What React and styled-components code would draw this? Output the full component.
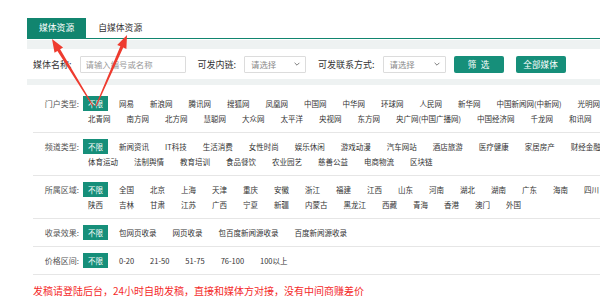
import React from 'react'
import styled, { createGlobalStyle } from 'styled-components'

const TEAL = '#168f7a'
const TEAL_DARK = '#11856f'

const GlobalStyle = createGlobalStyle`
    html, body {
        margin: 0;
        padding: 0;
        background: #fff;
        overflow: hidden;
        font-family: "Noto Sans CJK SC", "Noto Sans", sans-serif;
    }
`

const filters = [
    {
        label: '门户类型:',
        options: ['不限', '网易', '新浪网', '腾讯网', '搜狐网', '凤凰网', '中国网', '中华网', '环球网', '人民网', '新华网', '中国新闻网(中新网)', '光明网',
            '北青网', '南方网', '北方网', '慧聪网', '大众网', '太平洋', '央视网', '东方网', '央广网(中国广播网)', '中国经济网', '千龙网', '和讯网'],
    },
    {
        label: '频道类型:',
        options: ['不限', '新闻资讯', 'IT科技', '生活消费', '女性时尚', '娱乐休闲', '游戏动漫', '汽车网站', '酒店旅游', '医疗健康', '家居房产', '财经金融',
            '体育运动', '法制舆情', '教育培训', '食品餐饮', '农业园艺', '慈善公益', '电商物流', '区块链'],
    },
    {
        label: '所属区域:',
        options: ['不限', '全国', '北京', '上海', '天津', '重庆', '安徽', '浙江', '福建', '江西', '山东', '河南', '湖北', '湖南', '广东', '海南', '四川',
            '陕西', '吉林', '甘肃', '江苏', '广西', '宁夏', '新疆', '内蒙古', '黑龙江', '西藏', '青海', '香港', '澳门', '外国'],
    },
    {
        label: '收录效果:',
        options: ['不限', '包网页收录', '网页收录', '包百度新闻源收录', '百度新闻源收录'],
    },
    {
        label: '价格区间:',
        options: ['不限', '0-20', '21-50', '51-75', '76-100', '100以上'],
    },
]

// annotation arrows drawn over the screenshot
const arrows = [
    { tail: [93, 106], tip: [52, 39] },
    { tail: [96, 106], tip: [127, 35] },
]

function arrowPoints({ tail, tip }) {
    const dx = tip[0] - tail[0]
    const dy = tip[1] - tail[1]
    const len = Math.hypot(dx, dy)
    const ux = dx / len
    const uy = dy / len
    const nx = -uy
    const ny = ux
    const bx = tip[0] - ux * 13
    const by = tip[1] - uy * 13
    const pt = (x, y, w) => `${x + nx * w},${y + ny * w}`
    return [
        pt(tail[0], tail[1], 0.5),
        pt(bx, by, 1.6),
        pt(bx, by, 5),
        `${tip[0]},${tip[1]}`,
        pt(bx, by, -5),
        pt(bx, by, -1.6),
        pt(tail[0], tail[1], -0.5),
    ].join(' ')
}

function Chevron() {
    return (
        <svg width="8" height="8" viewBox="0 0 10 10">
            <path d="M2 3.5 L5 6.5 L8 3.5" fill="none" stroke="#777" strokeWidth="1.2" />
        </svg>
    )
}

function App() {
    return (
        <Page>
            <GlobalStyle />
            <TabBar>
                <Tab $active>媒体资源</Tab>
                <Tab>自媒体资源</Tab>
            </TabBar>

            <SearchPanel>
                <FilterBar>
                    <Field>
                        <FieldLabel>媒体名称:</FieldLabel>
                        <TextInput placeholder="请输入编号或名称" />
                    </Field>
                    <Field>
                        <FieldLabel>可发内链:</FieldLabel>
                        <SelectBox>请选择<Chevron /></SelectBox>
                    </Field>
                    <Field $gap={8}>
                        <FieldLabel>可发联系方式:</FieldLabel>
                        <SelectBox $w={63}>请选择<Chevron /></SelectBox>
                    </Field>
                    <ActionButton>筛{'\u2002'}选</ActionButton>
                    <ActionButton>全部媒体</ActionButton>
                </FilterBar>
            </SearchPanel>

            <Lists>
                {filters.map(f => (
                    <Section key={f.label}>
                        <RowLabel>{f.label}</RowLabel>
                        <OptionList>
                            {f.options.map((o, i) => (
                                <Option key={o} $active={i === 0}>{o}</Option>
                            ))}
                        </OptionList>
                    </Section>
                ))}
                <Notice>发稿请登陆后台，24小时自助发稿，直接和媒体方对接，没有中间商赚差价</Notice>
            </Lists>

            <Overlay width="600" height="303" viewBox="0 0 600 303">
                {arrows.map((a, i) => (
                    <polygon key={i} points={arrowPoints(a)} fill="#ee3b2f" />
                ))}
            </Overlay>
        </Page>
    )
}

export default App

const Page = styled.div`
    position: relative;
    width: 600px;
    height: 303px;
    padding: 18px 0 0 27px;
    box-sizing: border-box;
    overflow: hidden;
`

const TabBar = styled.div`
    display: flex;
    height: 20px;
    border-bottom: 1.5px solid ${TEAL_DARK};
`

const Tab = styled.div`
    padding: 0 12px;
    line-height: 20px;
    font-size: 8.8px;
    color: ${props => props.$active ? '#fff' : '#333'};
    background: ${props => props.$active ? TEAL_DARK : 'transparent'};
`

const SearchPanel = styled.div`
    margin-top: 1px;
    padding: 9px 0 6px;
    background: #eef2f2;
`

const FilterBar = styled.div`
    display: flex;
    align-items: center;
    height: 30px;
    padding-left: 6px;
    background: #fff;
`

const Field = styled.div`
    display: flex;
    align-items: center;
    gap: 8px;
    margin-right: ${props => props.$gap || 12}px;
`

const FieldLabel = styled.span`
    font-size: 9px;
    color: #333;
    white-space: nowrap;
`

const TextInput = styled.input`
    box-sizing: border-box;
    width: 106px;
    height: 17px;
    padding: 0 5px;
    border: 1px solid #dcdcdc;
    border-radius: 1px;
    font-family: inherit;
    font-size: 8.4px;
    outline: none;

    &::placeholder {
        color: #999;
    }
`

const SelectBox = styled.div`
    box-sizing: border-box;
    display: flex;
    align-items: center;
    justify-content: space-between;
    width: ${props => props.$w || 62}px;
    height: 17px;
    padding: 0 4px 0 6px;
    border: 1px solid #dcdcdc;
    border-radius: 1px;
    font-size: 8.4px;
    color: #888;
`

const ActionButton = styled.button`
    flex-shrink: 0;
    width: 50px;
    height: 17px;
    margin-right: 12px;
    padding: 0;
    border: none;
    border-radius: 2px;
    background: ${TEAL};
    color: #fff;
    font-family: inherit;
    font-size: 8.6px;
`

const Lists = styled.div`
    padding: 5px 0 0 6px;
`

const Section = styled.div`
    display: flex;
    align-items: flex-start;
    width: 1000px;
    padding: 6px 0;
    border-bottom: 1px solid #e6e6e6;
`

const RowLabel = styled.div`
    flex-shrink: 0;
    width: 46px;
    margin-right: 4px;
    text-align: right;
    line-height: 15px;
    font-size: 8px;
    color: #555;
    white-space: nowrap;
`

const OptionList = styled.div`
    display: flex;
    flex-wrap: wrap;
    column-gap: 6px;
    width: 540px;
`

const Option = styled.span`
    padding: 0 5px;
    line-height: 15px;
    font-size: 7.5px;
    white-space: nowrap;
    color: ${props => props.$active ? '#fff' : '#333'};
    background: ${props => props.$active ? TEAL : 'transparent'};
`

const Notice = styled.div`
    padding-top: 9px;
    font-size: 10px;
    line-height: 14px;
    color: #f42a2a;
`

const Overlay = styled.svg`
    position: absolute;
    top: 0;
    left: 0;
    pointer-events: none;
`
